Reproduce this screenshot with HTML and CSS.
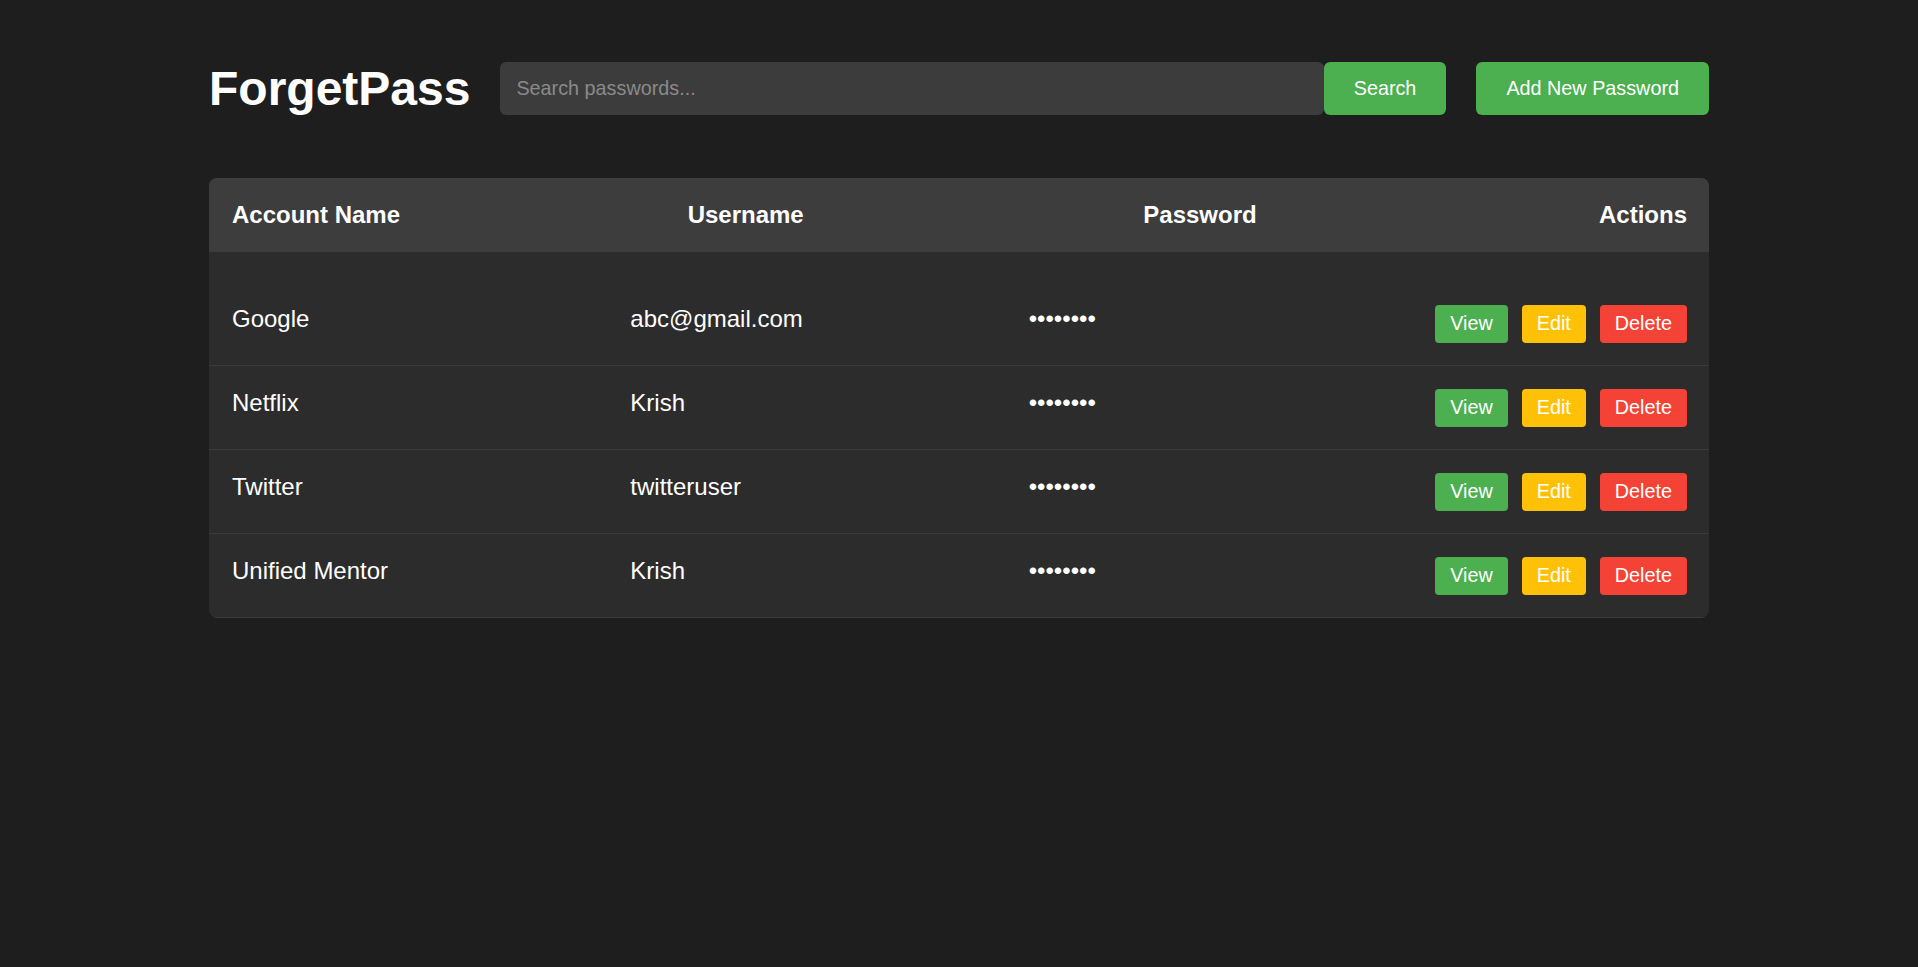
FILE: index.html
```html
<!DOCTYPE html>
<html lang="en">
<head>
<meta charset="utf-8">
<title>ForgetPass</title>
<link rel="stylesheet" href="styles.css">
</head>
<body>
<div class="app">
  <header class="topbar">
    <h1 class="brand">ForgetPass</h1>
    <form class="search" onsubmit="return false">
      <input class="search-input" type="text" placeholder="Search passwords...">
      <button class="btn btn-lg btn-green" type="submit">Search</button>
    </form>
    <button class="btn btn-lg btn-green add-btn" type="button">Add New Password</button>
  </header>

  <section class="vault">
    <div class="vault-head">
      <div>Account Name</div>
      <div>Username</div>
      <div>Password</div>
      <div>Actions</div>
    </div>
    <div class="vault-body">
      <div class="row">
        <div class="cell">Google</div>
        <div class="cell">abc@gmail.com</div>
        <div class="cell">••••••••</div>
        <div class="actions">
          <button class="btn btn-sm btn-green">View</button>
          <button class="btn btn-sm btn-yellow">Edit</button>
          <button class="btn btn-sm btn-red">Delete</button>
        </div>
      </div>
      <div class="row">
        <div class="cell">Netflix</div>
        <div class="cell">Krish</div>
        <div class="cell">••••••••</div>
        <div class="actions">
          <button class="btn btn-sm btn-green">View</button>
          <button class="btn btn-sm btn-yellow">Edit</button>
          <button class="btn btn-sm btn-red">Delete</button>
        </div>
      </div>
      <div class="row">
        <div class="cell">Twitter</div>
        <div class="cell">twitteruser</div>
        <div class="cell">••••••••</div>
        <div class="actions">
          <button class="btn btn-sm btn-green">View</button>
          <button class="btn btn-sm btn-yellow">Edit</button>
          <button class="btn btn-sm btn-red">Delete</button>
        </div>
      </div>
      <div class="row">
        <div class="cell">Unified Mentor</div>
        <div class="cell">Krish</div>
        <div class="cell">••••••••</div>
        <div class="actions">
          <button class="btn btn-sm btn-green">View</button>
          <button class="btn btn-sm btn-yellow">Edit</button>
          <button class="btn btn-sm btn-red">Delete</button>
        </div>
      </div>
    </div>
  </section>
</div>
</body>
</html>
```
FILE: styles.css
```css
* {
  box-sizing: border-box;
}

body {
  margin: 0;
  background: #1e1e1e;
  color: #ffffff;
  font-family: "Liberation Sans", Arial, sans-serif;
}

.app {
  width: 1500px;
  margin: 0 auto;
  padding-top: 61px;
}

.topbar {
  display: flex;
  align-items: center;
  gap: 30px;
  height: 55px;
}

.brand {
  margin: 0;
  font-size: 48px;
  font-weight: bold;
  line-height: 55px;
  white-space: nowrap;
}

.search {
  flex: 1;
  display: flex;
  margin: 0;
}

.search-input {
  flex: 1;
  min-width: 0;
  height: 53px;
  border: 0;
  border-radius: 6px;
  background: #3c3c3c;
  padding: 0 16px;
  color: #ffffff;
  font-family: "Liberation Sans", Arial, sans-serif;
  font-size: 19.8px;
  outline: none;
}

.search-input::placeholder {
  color: #8a8a8a;
}

.btn {
  border: 0;
  color: #ffffff;
  font-family: "Liberation Sans", Arial, sans-serif;
  cursor: pointer;
  white-space: nowrap;
}

.btn-lg {
  height: 53px;
  padding: 0 30px;
  font-size: 19.8px;
  border-radius: 6px;
}

.btn-sm {
  height: 38px;
  padding: 0 15px;
  font-size: 19.8px;
  border-radius: 4px;
}

.btn-green {
  background: #4caf50;
}

.btn-yellow {
  background: #ffc107;
}

.btn-red {
  background: #f44336;
}

.vault {
  margin-top: 62px;
  background: #2c2c2c;
  border-radius: 8px;
  overflow: hidden;
}

.vault-head {
  display: grid;
  grid-template-columns: 1fr 1fr 1fr auto;
  align-items: center;
  height: 74px;
  padding: 0 22px 0 23px;
  background: #3d3d3d;
  font-size: 24px;
  font-weight: bold;
}

.vault-body {
  padding-top: 30px;
}

.row {
  display: grid;
  grid-template-columns: 1fr 1fr 1fr 260px;
  column-gap: 44px;
  align-items: center;
  height: 84px;
  padding: 0 22px 0 23px;
  border-bottom: 1px solid #3b3b3b;
  font-size: 24px;
}

.cell {
  margin-bottom: 10px;
  white-space: nowrap;
}

.actions {
  display: flex;
  gap: 14px;
  justify-content: flex-end;
}
```
